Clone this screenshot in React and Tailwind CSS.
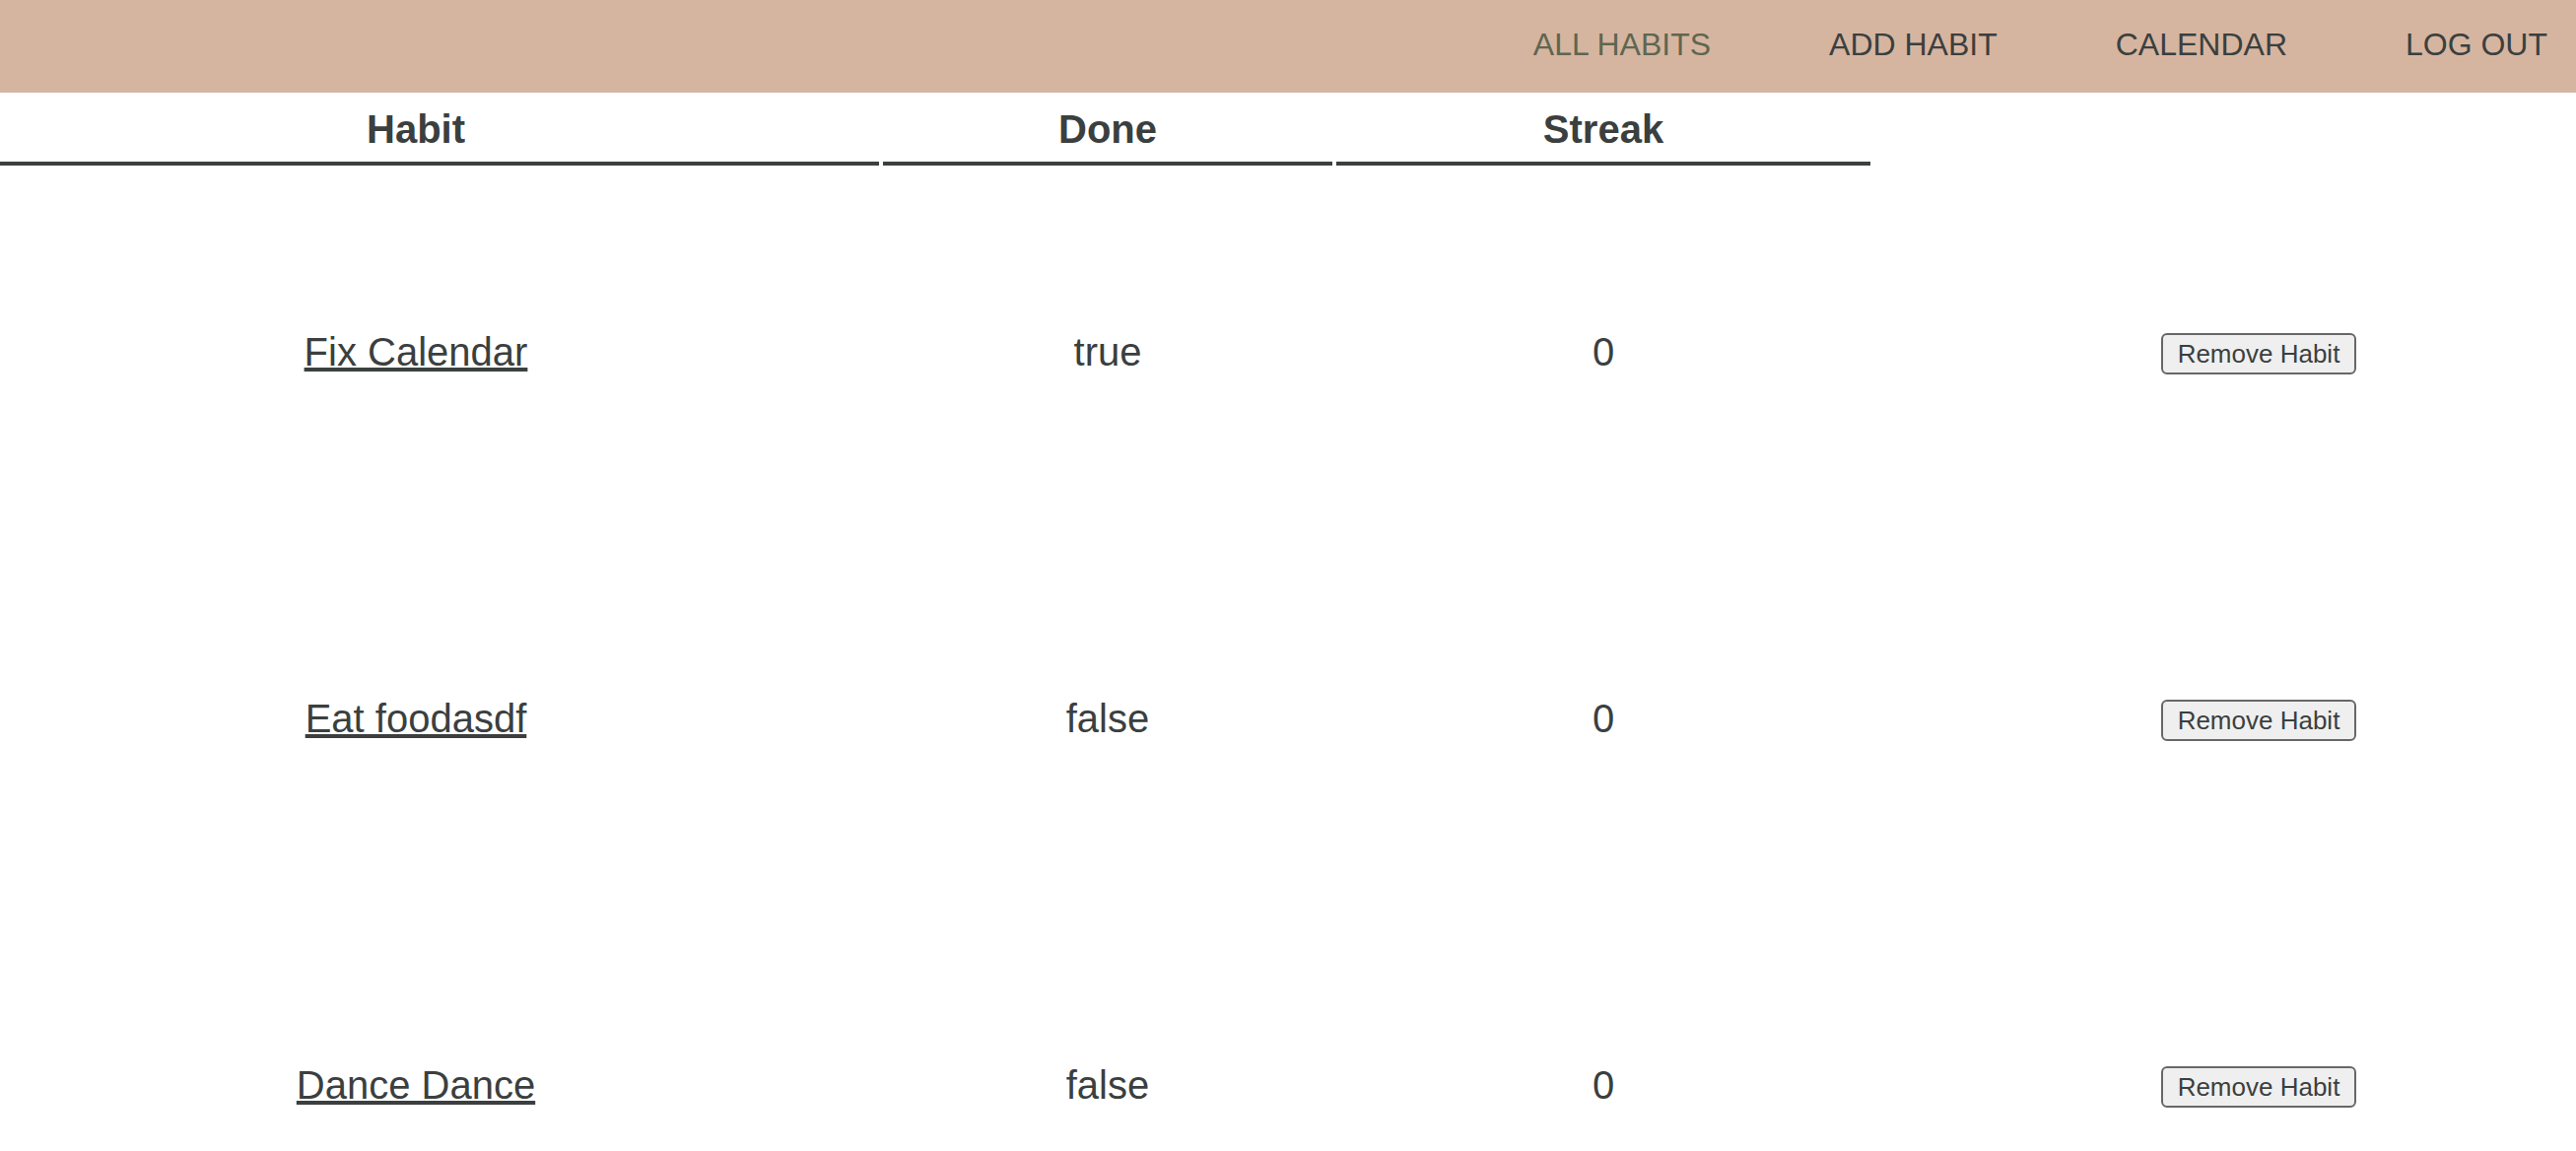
export default function App() {
  const habits = [
    { name: "Fix Calendar", done: "true", streak: 0 },
    { name: "Eat foodasdf", done: "false", streak: 0 },
    { name: "Dance Dance", done: "false", streak: 0 },
  ];
  return (
    <div className="min-h-screen bg-white text-[#3b3f3f] font-['Liberation_Sans',Arial,sans-serif] overflow-hidden">
      <nav className="h-[94px] bg-[#d6b5a0] flex items-center justify-end gap-[120px] pr-[29px] pb-[4px] text-[32px]">
        <a className="text-[#5f6650]">ALL HABITS</a>
        <a>ADD HABIT</a>
        <a>CALENDAR</a>
        <a>LOG OUT</a>
      </nav>
      <div className="grid grid-cols-[892px_456px_542px_1fr] gap-x-[4px] text-[40px]">
        <div className="h-[74px] border-b-4 border-[#3b3f3f] flex items-center justify-center pr-[48px] pt-[3px] font-bold">Habit</div>
        <div className="h-[74px] border-b-4 border-[#3b3f3f] flex items-center justify-center pt-[3px] font-bold">Done</div>
        <div className="h-[74px] border-b-4 border-[#3b3f3f] flex items-center justify-center pt-[3px] font-bold">Streak</div>
        <div className="h-[74px]"></div>
      </div>
      <div className="mt-[3px]">
        {habits.map((h) => (
          <div key={h.name} className="grid grid-cols-[892px_456px_542px_1fr] gap-x-[4px] h-[372px] items-center text-[40px]">
            <div className="flex justify-center pr-[48px]">
              <a className="underline">{h.name}</a>
            </div>
            <div className="flex justify-center">{h.done}</div>
            <div className="flex justify-center">{h.streak}</div>
            <div className="flex justify-center pl-[68px] pt-[4px]">
              <button className="h-[42px] px-[15px] text-[26px] leading-none text-[#3b3f3f] bg-[#efefef] border-2 border-[#676767] rounded-[6px]">
                Remove Habit
              </button>
            </div>
          </div>
        ))}
      </div>
    </div>
  );
}
